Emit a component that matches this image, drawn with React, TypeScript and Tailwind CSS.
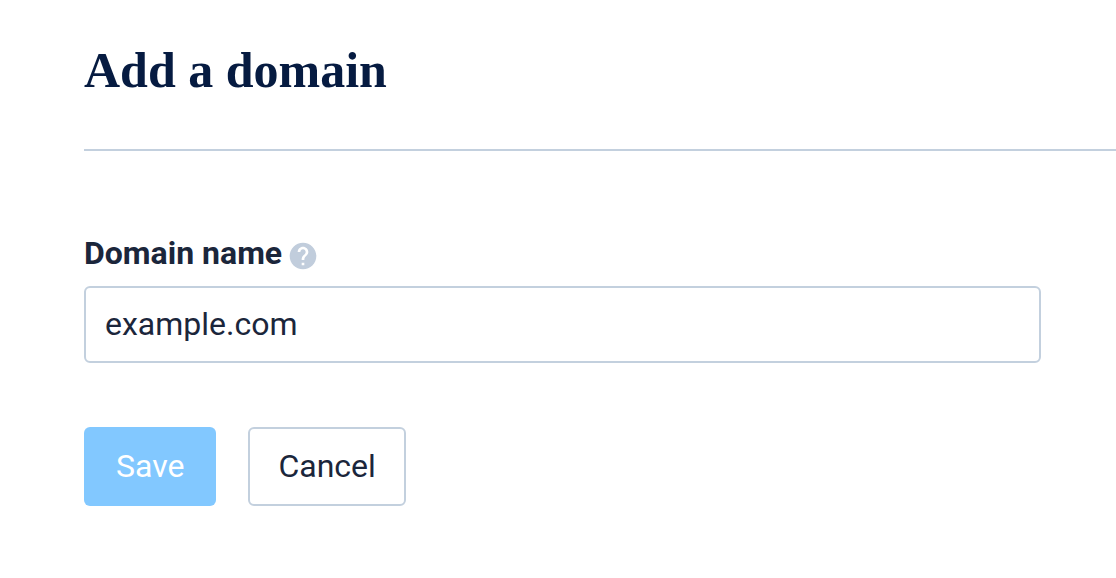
import { useState } from 'react';

export default function App() {
  const [domain, setDomain] = useState('example.com');

  return (
    <div className="min-h-screen bg-white pt-10 pl-21 pb-18 font-['Roboto',sans-serif] text-[32px] text-[#1b263b]">
      <header className="border-b-2 border-[#c3d0de] pb-[49px]">
        <h1 className="font-['Liberation_Serif',serif] text-[50px] leading-[60px] font-bold text-[#061b41]">
          Add a domain
        </h1>
      </header>

      <form className="mt-[82px] mr-[75px]" onSubmit={(e) => e.preventDefault()}>
        <div className="flex items-center gap-[5px]">
          <label htmlFor="domain" className="leading-10 font-bold">
            Domain name
          </label>
          <button type="button" aria-label="Help" className="pt-1.5">
            <svg viewBox="0 0 24 24" className="size-8" fill="#c1cddc">
              <path d="M12 2C6.48 2 2 6.48 2 12s4.48 10 10 10 10-4.48 10-10S17.52 2 12 2zm1 17h-2v-2h2v2zm2.07-7.75l-.9.92C13.45 12.9 13 13.5 13 15h-2v-.5c0-1.1.45-2.1 1.17-2.83l1.24-1.26c.37-.36.59-.86.59-1.41 0-1.1-.9-2-2-2s-2 .9-2 2H8c0-2.21 1.79-4 4-4s4 1.79 4 4c0 .88-.36 1.68-.93 2.25z" />
            </svg>
          </button>
        </div>

        <input
          id="domain"
          type="text"
          className="mt-[13px] h-[77px] w-full rounded-md border-2 border-[#c3d0de] px-[19px] pb-0.5"
          value={domain}
          onChange={(e) => setDomain(e.target.value)}
        />

        <div className="mt-16 flex gap-8">
          <button type="submit" className="h-[79px] rounded-md bg-[#82c8ff] px-8 pb-0.5 text-white">
            Save
          </button>
          <button type="button" className="h-[79px] rounded-md border-2 border-[#c3d0de] px-7 pb-0.5">
            Cancel
          </button>
        </div>
      </form>
    </div>
  );
}
